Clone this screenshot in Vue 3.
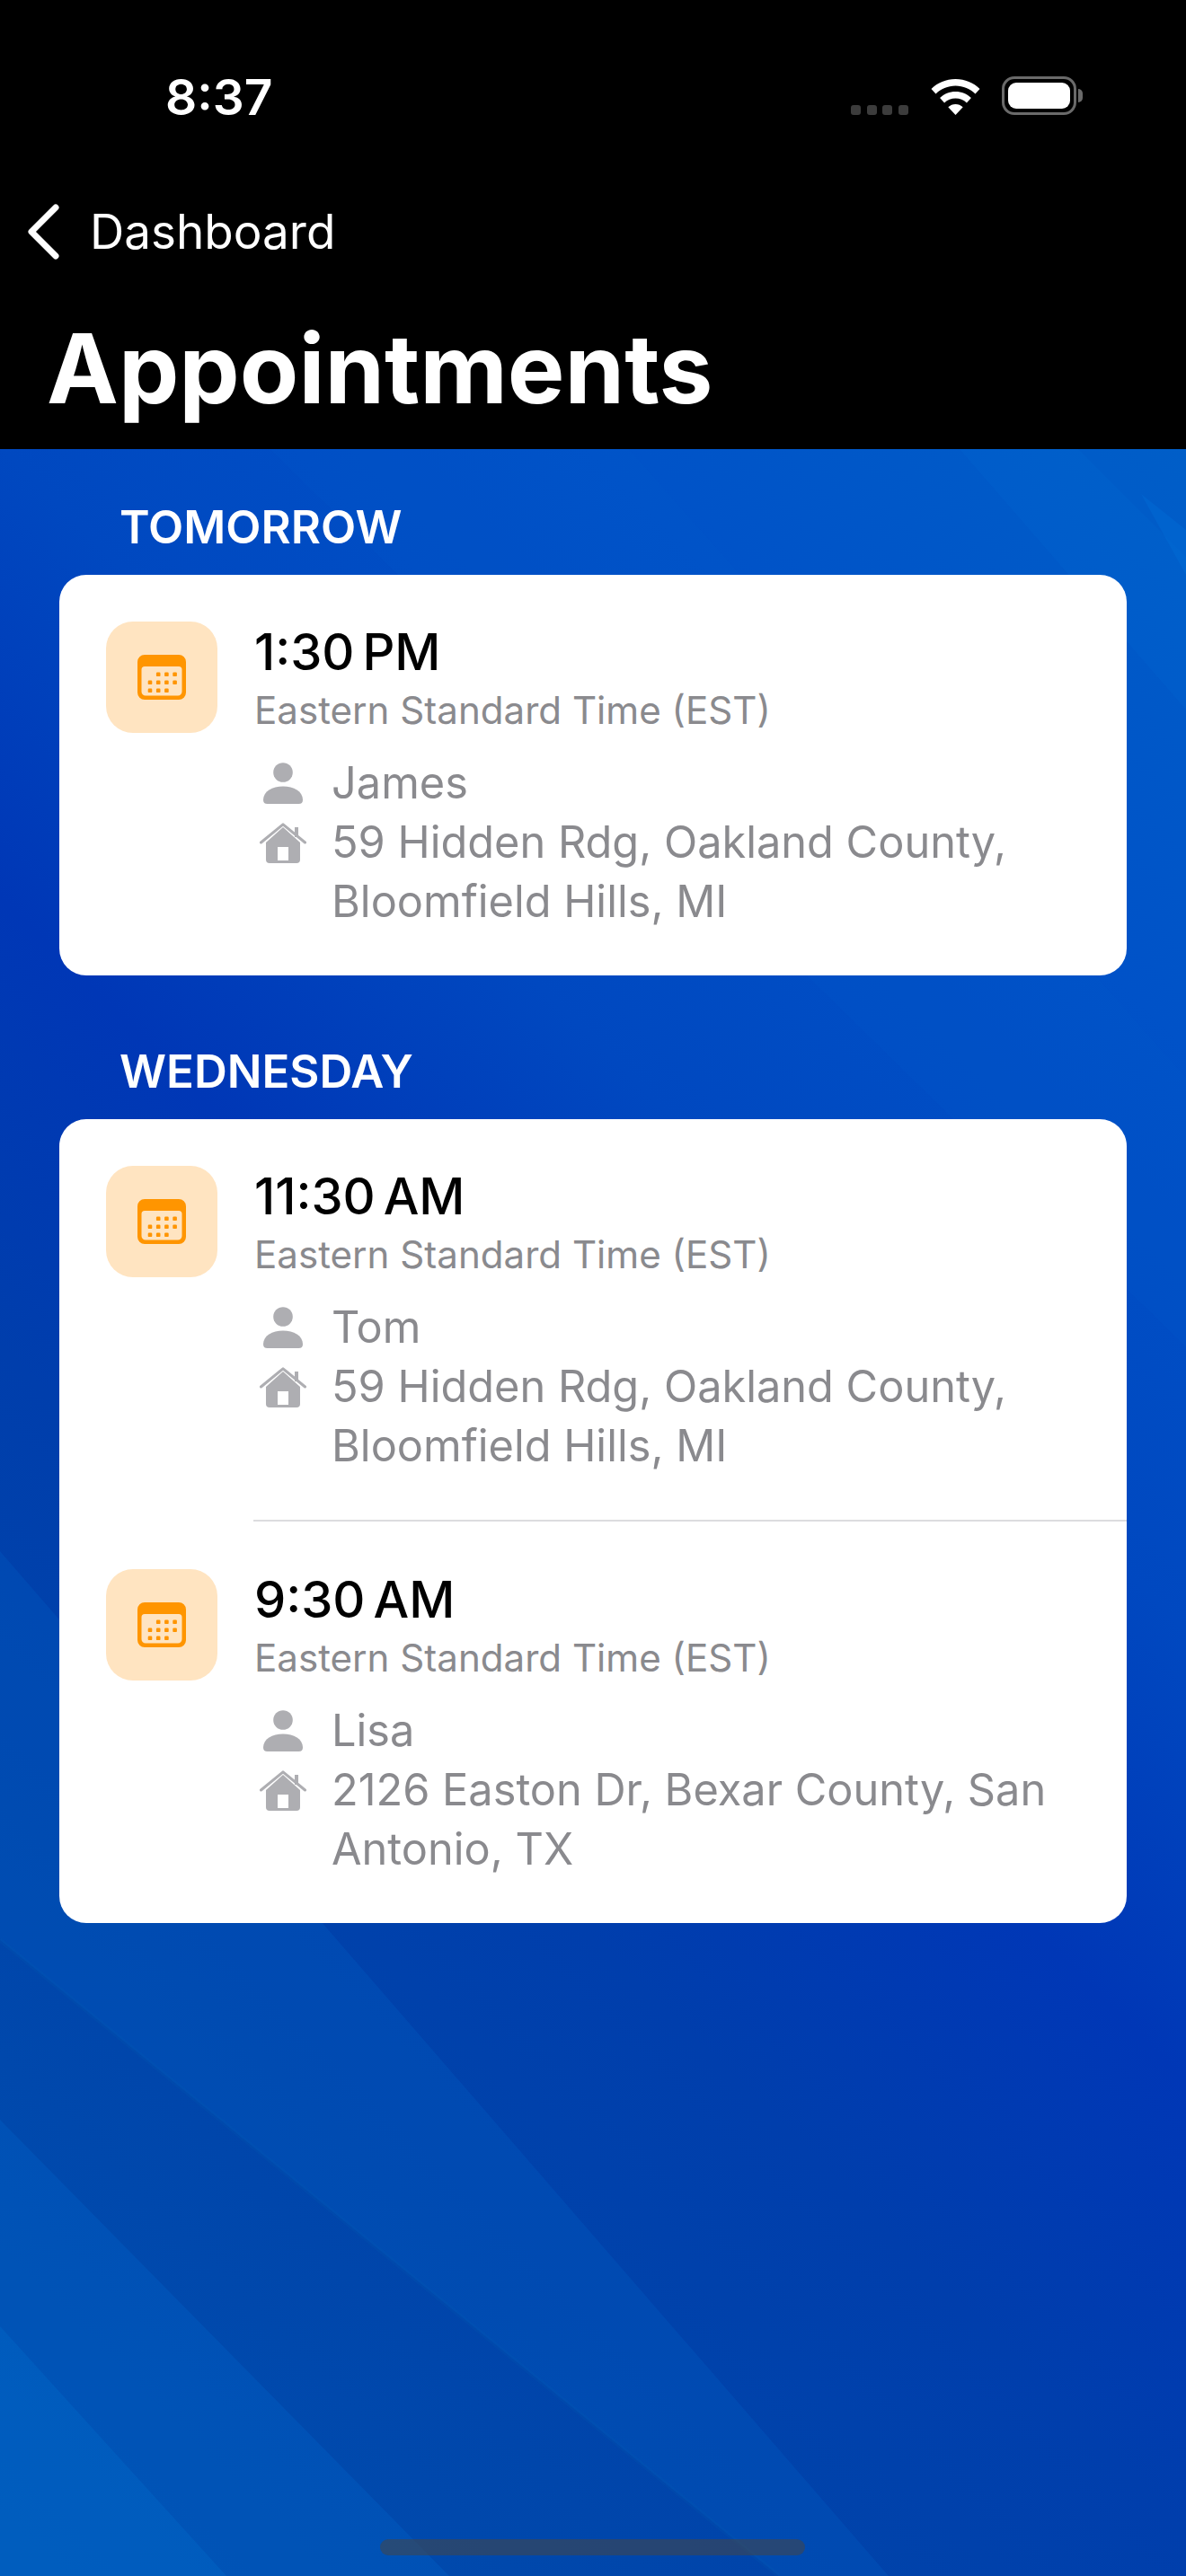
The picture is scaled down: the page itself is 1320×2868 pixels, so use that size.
<template>
  <div class="phone">
    <!-- 背景斜纹 -->
    <svg class="wallpaper" viewBox="0 0 1320 2368" preserveAspectRatio="none" aria-hidden="true">
      <defs>
        <linearGradient id="base" gradientUnits="userSpaceOnUse" x1="1320" y1="0" x2="-524" y2="1844">
          <stop offset="0" stop-color="#005ec8" />
          <stop offset="0.18" stop-color="#0052c8" />
          <stop offset="0.357" stop-color="#0048c0" />
          <stop offset="0.493" stop-color="#0037b6" />
          <stop offset="0.629" stop-color="#003eac" />
          <stop offset="0.765" stop-color="#0044aa" />
          <stop offset="1" stop-color="#0050b0" />
        </linearGradient>
      </defs>
      <rect width="1320" height="2368" fill="url(#base)" />
      <polygon points="300,0 700,0 1320,700 1320,1000" fill="#0060d0" opacity="0.1" />
      <polygon points="0,1227 989,2368 867,2368 0,1660" fill="#0058c0" opacity="0.35" />
      <polygon points="0,1860 500,2368 0,2368" fill="#0060c4" opacity="0.4" />
      <polygon points="0,2090 252,2368 0,2368" fill="#0068c8" opacity="0.4" />
      <polyline points="0,1660 867,2368" fill="none" stroke="#0060b0" stroke-width="5" opacity="0.18" />
      <polygon points="1068,0 1200,0 1320,120 1320,290" fill="#0070d8" opacity="0.15" />
      <polygon points="1270,50 1320,90 1320,140" fill="#0078e0" opacity="0.25" />
    </svg>

    <!-- 状态栏和标题 -->
    <header class="top-bar">
      <div class="status-bar">
        <span class="clock">8:37</span>
        <div class="status-icons">
          <div class="signal">
            <i v-for="n in 4" :key="n"></i>
          </div>
          <svg class="wifi" viewBox="0 0 55 40">
            <path d="M27.5 0C17 0 7.5 4 0.5 11l5 5.5C11 11 19 7.5 27.5 7.5S44 11 49.5 16.5l5-5.5C47.5 4 38 0 27.5 0z" fill="#fff" />
            <path d="M27.5 14c-6.6 0-12.8 2.6-17.4 7l5 5.4c3.3-3.2 7.7-5 12.4-5s9.100 1.800 12.400 5l5-5.400c-4.600-4.400-10.800-7-17.400-7z" fill="#fff" />
            <path d="M27.500 28c-3 0-6 1.200-8.200 3.300L27.500 40l8.200-8.700C33.500 29.200 30.500 28 27.500 28z" fill="#fff" />
          </svg>
          <div class="battery">
            <div class="battery-level"></div>
          </div>
        </div>
      </div>
      <a class="back-link">
        <svg class="chevron" viewBox="0 0 37 62">
          <path d="M32 4 L5 31 L32 58" fill="none" stroke="#fff" stroke-width="7" stroke-linecap="round" stroke-linejoin="round" />
        </svg>
        <span>Dashboard</span>
      </a>
      <h1>Appointments</h1>
    </header>

    <main class="content">
      <section v-for="group in groups" :key="group.title" class="group">
        <h2>{{ group.title }}</h2>
        <div class="card">
          <div v-for="item in group.items" :key="item.id" class="appt">
            <div class="appt-icon">
              <svg viewBox="0 0 54 50">
                <path fill-rule="evenodd" d="M8 0h38a8 8 0 0 1 8 8v34a8 8 0 0 1-8 8H8a8 8 0 0 1-8-8V8a8 8 0 0 1 8-8zM8 13a3.500 3.500 0 0 0-3.500 3.500V41A4.500 4.500 0 0 0 9 45.500h36a4.500 4.500 0 0 0 4.500-4.500V16.500A3.500 3.500 0 0 0 46 13z" fill="#ff9500" />
                <rect v-for="d in calendarDots" :key="d.x + '-' + d.y" :x="d.x" :y="d.y" width="4.600" height="4.600" rx="1.200" fill="#ff9500" />
              </svg>
            </div>
            <div class="appt-body">
              <div class="appt-time">{{ item.time }}</div>
              <div class="appt-zone">Eastern Standard Time (EST)</div>
              <div class="appt-line appt-name">
                <span class="line-icon">
                  <svg class="person" viewBox="0 0 44 46">
                    <circle cx="22" cy="11" r="10.800" fill="#aeaeb2" />
                    <path d="M0 41.500C0 32 10 26.500 22 26.500S44 32 44 41.500C44 44.500 42.500 46 39.500 46H4.500C1.500 46 0 44.500 0 41.500z" fill="#aeaeb2" />
                  </svg>
                </span>
                <span>{{ item.name }}</span>
              </div>
              <div class="appt-line">
                <span class="line-icon">
                  <svg class="house" viewBox="0 0 52 45">
                    <path d="M7 22 L26 5 L45 22 V41 a4 4 0 0 1-4 4 H11 a4 4 0 0 1-4-4z" fill="#aeaeb2" />
                    <path d="M1.500 22 L26 1.800 L50.500 22" fill="none" stroke="#aeaeb2" stroke-width="3" stroke-linecap="round" stroke-linejoin="round" />
                    <rect x="39" y="5" width="4" height="11" fill="#aeaeb2" />
                    <rect x="20" y="27" width="12" height="15" fill="#fff" />
                  </svg>
                </span>
                <span class="address">{{ item.address }}</span>
              </div>
            </div>
          </div>
        </div>
      </section>
    </main>

    <div class="home-indicator"></div>
  </div>
</template>

<script setup>
const hiddenRdg = '59 Hidden Rdg, Oakland County, Bloomfield Hills, MI'

// 预约数据
const groups = [
  {
    title: 'TOMORROW',
    items: [
      { id: 1, time: '1:30 PM', name: 'James', address: hiddenRdg }
    ]
  },
  {
    title: 'WEDNESDAY',
    items: [
      { id: 2, time: '11:30 AM', name: 'Tom', address: hiddenRdg },
      { id: 3, time: '9:30 AM', name: 'Lisa', address: '2126 Easton Dr, Bexar County, San Antonio, TX' }
    ]
  }
]

// 日历图标上的小点
const calendarDots = []
const dotRows = [
  { y: 19.500, cols: [1, 2, 3] },
  { y: 28.500, cols: [0, 1, 2, 3] },
  { y: 37.500, cols: [0, 1, 2] }
]
dotRows.forEach((row) => {
  row.cols.forEach((c) => {
    calendarDots.push({ x: 11.700 + c * 9.200, y: row.y })
  })
})
</script>

<style>
body {
  margin: 0;
  background: #0046b8;
}
</style>

<style scoped>
.phone {
  position: relative;
  width: 1320px;
  height: 2868px;
  overflow: hidden;
  font-family: Inter, "Noto Sans", "Liberation Sans", sans-serif;
  background: #000;
}

.wallpaper {
  position: absolute;
  left: 0;
  top: 500px;
  width: 1320px;
  height: 2368px;
}

/* 顶部黑色区域 */
.top-bar {
  position: relative;
  height: 500px;
  box-sizing: border-box;
  background: #000;
  color: #fff;
}

.status-bar {
  display: flex;
  justify-content: space-between;
  align-items: flex-start;
  height: 212px;
  box-sizing: border-box;
  padding: 74px 122px 0 184px;
}

.clock {
  font-size: 55px;
  font-weight: 600;
  line-height: 68px;
}

.status-icons {
  display: flex;
  align-items: flex-end;
  margin-top: 11px;
}

.signal {
  display: flex;
  gap: 6.700px;
  margin-right: 25px;
}

.signal i {
  display: block;
  width: 11px;
  height: 11px;
  border-radius: 3px;
  background: #3c3c3c;
}

.wifi {
  display: block;
  width: 55px;
  height: 40px;
  margin-right: 24px;
}

.battery {
  position: relative;
  width: 83px;
  height: 43px;
  box-sizing: border-box;
  padding: 4px;
  border: 3px solid #6a6a6a;
  border-radius: 14px;
}

.battery::after {
  content: "";
  position: absolute;
  right: -10px;
  top: 11px;
  width: 5px;
  height: 15px;
  border-radius: 0 8px 8px 0;
  background: #6a6a6a;
}

.battery-level {
  height: 100%;
  border-radius: 9px;
  background: #fff;
}

.back-link {
  display: flex;
  align-items: center;
  height: 92px;
  padding-left: 30px;
  font-size: 53px;
}

.chevron {
  display: block;
  width: 37px;
  height: 62px;
  margin-right: 33px;
}

h1 {
  margin: 46px 0 0;
  padding-left: 52px;
  font-size: 107px;
  font-weight: 700;
  line-height: 120px;
}

/* 列表 */
.content {
  position: relative;
  padding: 57px 66px 0;
}

.group + .group {
  margin-top: 77px;
}

h2 {
  margin: 0 0 23px;
  padding-left: 67px;
  font-size: 51px;
  font-weight: 600;
  line-height: 60px;
  color: #fff;
}

.card {
  overflow: hidden;
  border-radius: 30px;
  background: #fff;
}

.appt {
  display: flex;
  gap: 41px;
  padding: 52px 0 49px 52px;
}

.appt + .appt {
  position: relative;
  padding-top: 55px;
}

.appt + .appt::before {
  content: "";
  position: absolute;
  left: 216px;
  right: 0;
  top: 0;
  height: 2px;
  background: #dcdcdf;
}

.appt-icon {
  display: flex;
  flex: 0 0 124px;
  align-items: center;
  justify-content: center;
  height: 124px;
  border-radius: 30px;
  background: #ffe4c1;
}

.appt-icon svg {
  display: block;
  width: 54px;
  height: 50px;
}

.appt-body {
  flex: 1;
  min-width: 0;
  padding-right: 60px;
  padding-top: 2px;
}

.appt-time {
  font-size: 56px;
  font-weight: 500;
  line-height: 64px;
  word-spacing: -6px;
  color: #000;
  font-feature-settings: "case";
}

.appt-zone {
  margin-top: 6px;
  margin-bottom: 21px;
  font-size: 42.100px;
  line-height: 54px;
  color: #8a8a8e;
}

.appt-line {
  display: flex;
  margin-left: 2px;
  font-size: 48.700px;
  line-height: 66px;
  color: #8a8a8e;
}

.line-icon {
  display: flex;
  flex: 0 0 60px;
  justify-content: center;
  height: 66px;
  margin-right: 24px;
  align-items: center;
}

.person {
  display: block;
  width: 44px;
  height: 46px;
}

.house {
  display: block;
  width: 52px;
  height: 45px;
}

.address {
  flex: 1;
}

.home-indicator {
  position: absolute;
  left: 423px;
  top: 2827px;
  width: 473px;
  height: 18px;
  border-radius: 9px;
  background: rgba(70, 70, 70, 0.55);
}
</style>
